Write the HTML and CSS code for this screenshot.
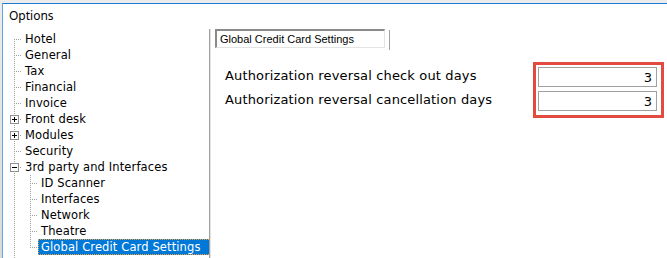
FILE: index.html
```html
<!DOCTYPE html>
<html>
<head>
  <meta charset="utf-8">
  <link rel="stylesheet" href="styles.css">
</head>
<body>
<div class="frame">
  <div class="window">
    <div class="title">Options</div>
    <div class="main">

      <!-- left tree -->
      <ul class="tree">
        <li class="row"><span class="col first"></span><span class="label">Hotel</span></li>
        <li class="row"><span class="col tee"></span><span class="label">General</span></li>
        <li class="row"><span class="col tee"></span><span class="label">Tax</span></li>
        <li class="row"><span class="col tee"></span><span class="label">Financial</span></li>
        <li class="row"><span class="col tee"></span><span class="label">Invoice</span></li>
        <li class="row"><span class="col tee"><svg class="box" width="9" height="9"><rect x=".5" y=".5" width="8" height="8" fill="#fff" stroke="#919191"/><path d="M2 4.5h5M4.5 2v5" stroke="#000"/></svg></span><span class="label">Front desk</span></li>
        <li class="row"><span class="col tee"><svg class="box" width="9" height="9"><rect x=".5" y=".5" width="8" height="8" fill="#fff" stroke="#919191"/><path d="M2 4.5h5M4.5 2v5" stroke="#000"/></svg></span><span class="label">Modules</span></li>
        <li class="row"><span class="col tee"></span><span class="label">Security</span></li>
        <li class="row"><span class="col tee"><svg class="box" width="9" height="9"><rect x=".5" y=".5" width="8" height="8" fill="#fff" stroke="#919191"/><path d="M2 4.5h5" stroke="#000"/></svg></span><span class="label">3rd party and Interfaces</span></li>
        <li class="row"><span class="col pipe"></span><span class="col tee"></span><span class="label">ID Scanner</span></li>
        <li class="row"><span class="col pipe"></span><span class="col tee"></span><span class="label">Interfaces</span></li>
        <li class="row"><span class="col pipe"></span><span class="col tee"></span><span class="label">Network</span></li>
        <li class="row"><span class="col pipe"></span><span class="col tee"></span><span class="label">Theatre</span></li>
        <li class="row"><span class="col pipe"></span><span class="col elbow"></span><span class="label selected">Global Credit Card Settings</span></li>
        <li class="row"><span class="col pipe"></span></li>
      </ul>

      <div class="splitter"></div>

      <!-- right settings panel -->
      <div class="panel">
        <div class="header">
          <div class="caption">Global Credit Card Settings</div>
          <div class="tabline"></div>
        </div>
        <div class="form">
          <div class="labels">
            <div class="field-label">Authorization reversal check out days</div>
            <div class="field-label">Authorization reversal cancellation days</div>
          </div>
          <div class="highlight">
            <input class="num" type="text" value="3">
            <input class="num" type="text" value="3">
          </div>
        </div>
      </div>

    </div>
  </div>
</div>
</body>
</html>
```

FILE: styles.css
```css
html, body {margin: 0; padding: 0; background: #fff; overflow: hidden;}
body {width: 667px; height: 258px; font-family: "DejaVu Sans", Verdana, sans-serif; color: #000;}

.frame {height: 258px; padding: 3px 0 0 2px; box-sizing: border-box; background: linear-gradient(#ececec, #dadada);}
.window {height: 100%; background: #fff; border-top: 1px solid #1a7fd4; border-left: 1px solid #5fa6e2; display: flex; flex-direction: column;}

.title {height: 16px; line-height: 16px; padding: 4px 0 5px 6px; font-family: "Noto Sans", "DejaVu Sans", sans-serif; font-size: 12px;}

.main {flex: 1; display: flex; min-height: 0;}

/* tree */
.tree {list-style: none; margin: 0; padding: 2px 0 0 3px; width: 203px; overflow: hidden; font-size: 11.5px; letter-spacing: 0.12px;}
.row {display: flex; height: 16px; line-height: 16px; white-space: nowrap;}
.col {width: 16px; height: 16px; flex: none; display: flex; align-items: center; justify-content: center;}
.col .box {margin-left: 1px;}

.pipe {background: repeating-linear-gradient(to bottom, #a0a0a0 0 1px, transparent 1px 2px) no-repeat 8px 0 / 1px 100%;}
.tee {background:
  repeating-linear-gradient(to bottom, #a0a0a0 0 1px, transparent 1px 2px) no-repeat 8px 0 / 1px 100%,
  repeating-linear-gradient(to right, #a0a0a0 0 1px, transparent 1px 2px) no-repeat 8px 8px / 9px 1px;}
.first {background:
  repeating-linear-gradient(to bottom, #a0a0a0 0 1px, transparent 1px 2px) no-repeat 8px 8px / 1px 8px,
  repeating-linear-gradient(to right, #a0a0a0 0 1px, transparent 1px 2px) no-repeat 8px 8px / 9px 1px;}
.elbow {background:
  repeating-linear-gradient(to bottom, #a0a0a0 0 1px, transparent 1px 2px) no-repeat 8px 0 / 1px 9px,
  repeating-linear-gradient(to right, #a0a0a0 0 1px, transparent 1px 2px) no-repeat 8px 8px / 9px 1px;}

.label {padding: 0 2px 0 2px; margin-left: 1px;}
.selected {background: #0078d7; color: #fff; outline: 1px dotted #f0a23a; outline-offset: -1px; padding: 0 10px 0 3px; margin-left: 0;}

.splitter {width: 1px; flex: none; background: #a0a0a0; border-right: 1px solid #e3e3e3;}

/* right panel */
.panel {flex: 1; padding-left: 4px;}
.header {display: flex; align-items: flex-start; gap: 4px;}
.caption {width: 164px; height: 16px; line-height: 16px; padding: 0 0 0 3px; font-family: "Liberation Sans", Arial, sans-serif; font-size: 11px;
  border-top: 2px solid #8a8a8a; border-left: 2px solid #8a8a8a; border-right: 1px solid #e3e3e3; border-bottom: 1px solid #e3e3e3;}
.tabline {width: 1px; height: 20px; margin-top: 1px; background: #a0a0a0;}

.form {display: flex; margin: 12px 0 0 10px;}
.labels {width: 308px; padding-top: 2px; font-size: 13px; letter-spacing: 0.15px;}
.field-label {height: 24px; line-height: 24px;}

.highlight {border: 3px solid #e34a40; padding: 2px 4px 4px 2px; display: flex; flex-direction: column; gap: 4px;}
.num {width: 119px; height: 20px; box-sizing: border-box; margin: 0; border: 1px solid #a0a0a0; padding: 0 4px; text-align: right;
  font-family: "DejaVu Sans", Verdana, sans-serif; font-size: 13px; outline: none;}
```
